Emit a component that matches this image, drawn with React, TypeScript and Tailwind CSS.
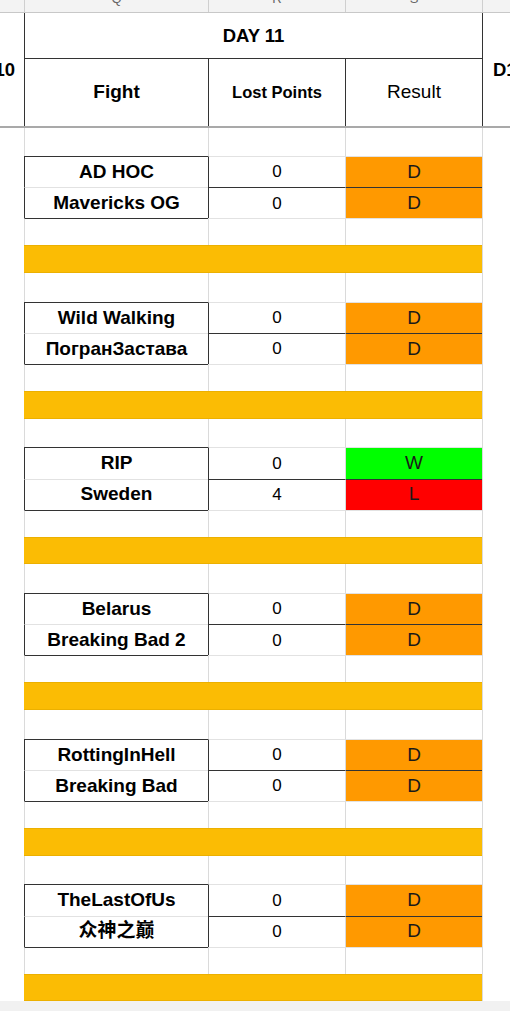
const grid = "grid grid-cols-[24px_184px_137px_137px_28px]";

const groups = [
  [
    ["AD HOC", "0", "D"],
    ["Mavericks OG", "0", "D"],
  ],
  [
    ["Wild Walking", "0", "D"],
    ["ПогранЗастава", "0", "D"],
  ],
  [
    ["RIP", "0", "W"],
    ["Sweden", "4", "L"],
  ],
  [
    ["Belarus", "0", "D"],
    ["Breaking Bad 2", "0", "D"],
  ],
  [
    ["RottingInHell", "0", "D"],
    ["Breaking Bad", "0", "D"],
  ],
  [
    ["TheLastOfUs", "0", "D"],
    ["众神之巅", "0", "D"],
  ],
];

const resultBg = {
  D: "bg-[#ff9900]",
  W: "bg-[#00ff00]",
  L: "bg-[#ff0000]",
};

function Spacer({ cls, fightTop, noTop }: { cls: string; fightTop?: boolean; noTop?: boolean }) {
  const top = noTop ? "" : "border-t border-t-[#e2e2e2]";
  return (
    <div className={`${grid} ${cls}`}>
      <div />
      <div
        className={`border-l border-l-[#dadada] ${
          fightTop ? "border-t border-t-[#333]" : top
        }`}
      />
      <div className={`border-l border-l-[#dadada] ${top}`} />
      <div className={`border-l border-l-[#dadada] ${top}`} />
      <div className="border-l border-l-[#dadada]" />
    </div>
  );
}

function YellowBar() {
  return (
    <div className={`${grid} h-[27.7px]`}>
      <div />
      <div className="col-span-3 bg-[#fbbc04] border-y border-y-[#ecb000]" />
      <div className="border-l border-l-[#dadada]" />
    </div>
  );
}

function FightRow({ row, first }: { row: string[]; first: boolean }) {
  const [name, pts, res] = row;
  return (
    <div className={`${grid} ${first ? "h-[31.3px]" : "h-[31px]"}`}>
      <div />
      <div
        className={`flex items-center justify-center border-l border-l-[#333] border-t font-bold text-[19px] ${
          first ? "border-t-[#333]" : "border-t-[#e2e2e2]"
        }`}
      >
        {name}
      </div>
      <div
        className={`flex items-center justify-center border-l border-l-[#333] border-t text-[17px] ${
          first ? "border-t-[#e2e2e2]" : "border-t-[#333]"
        }`}
      >
        {pts}
      </div>
      <div
        className={`flex items-center justify-center border-l border-l-[#dadada] border-t text-[19px] text-[#1a1a1a] ${
          resultBg[res as keyof typeof resultBg]
        } ${first ? "border-t-[#e2e2e2]" : "border-t-[#333]"}`}
      >
        {res}
      </div>
      <div className="border-l border-l-[#dadada]" />
    </div>
  );
}

export default function App() {
  return (
    <div className="h-[1011px] w-[510px] overflow-hidden bg-white text-black font-['Liberation_Sans','Noto_Sans_CJK_SC',sans-serif]">
      {/* column letters strip */}
      <div className={`${grid} h-[13px] bg-[#f3f3f3] border-b border-b-[#c8c8c8] text-[13px] text-[#666]`}>
        <div />
        <div className="flex justify-center overflow-hidden border-l border-l-[#cfcfcf]">
          <span className="-mt-[11px]">Q</span>
        </div>
        <div className="flex justify-center overflow-hidden border-l border-l-[#cfcfcf]">
          <span className="-mt-[11px]">R</span>
        </div>
        <div className="flex justify-center overflow-hidden border-l border-l-[#cfcfcf]">
          <span className="-mt-[11px]">S</span>
        </div>
        <div className="border-l border-l-[#cfcfcf]" />
      </div>

      {/* header */}
      <div className={`${grid} grid-rows-[46px_67px]`}>
        <div className="row-span-2 flex items-center justify-end overflow-hidden whitespace-nowrap pr-[9px] font-bold text-[18.5px]">
          D10
        </div>
        <div className="col-span-3 flex items-center justify-center border-l border-b border-[#333] font-bold text-[18.5px]">
          DAY 11
        </div>
        <div className="row-span-2 flex items-center overflow-hidden whitespace-nowrap border-l border-l-[#333] pl-[10px] font-bold text-[18.5px]">
          D12
        </div>
        <div className="flex items-center justify-center border-l border-l-[#333] font-bold text-[19px]">
          Fight
        </div>
        <div className="flex items-center justify-center border-l border-l-[#333] font-bold text-[16.5px]">
          Lost Points
        </div>
        <div className="flex items-center justify-center border-l border-l-[#333] text-[19px]">
          Result
        </div>
      </div>
      <div className="h-[2px] bg-[#a9a9a9]" />

      <Spacer cls="h-[28px]" noTop />

      {groups.map((g, i) => (
        <div key={i}>
          <FightRow row={g[0]} first />
          <FightRow row={g[1]} first={false} />
          <Spacer cls="h-[27px]" fightTop />
          <YellowBar />
          {i < groups.length - 1 && <Spacer cls="h-[28.7px]" noTop />}
        </div>
      ))}

      <div className="h-[10px] bg-[#f1f1f1]" />
    </div>
  );
}
